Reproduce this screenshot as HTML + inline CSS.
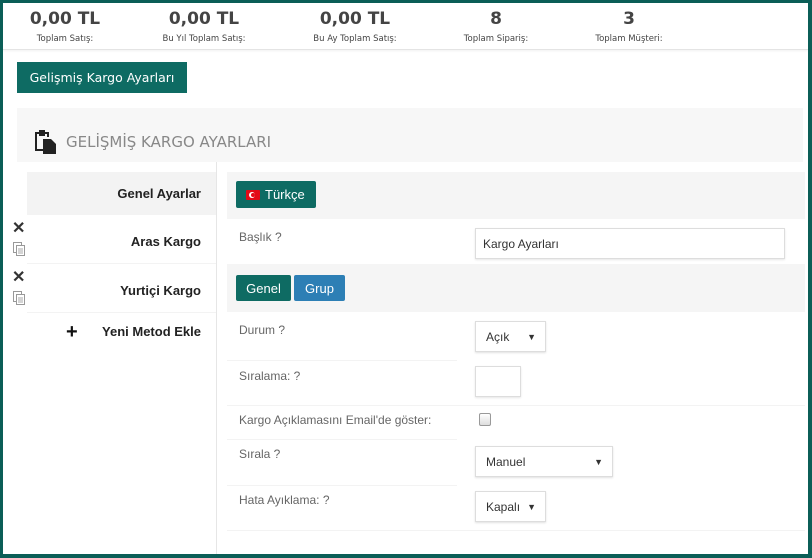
<!DOCTYPE html>
<html><head><meta charset="utf-8"><style>
*{box-sizing:border-box;margin:0;padding:0}
body{width:812px;height:558px;overflow:hidden;background:#0b5e57;font-family:"Liberation Sans",sans-serif;position:relative}
.frame{position:absolute;left:3px;top:3px;width:805px;height:551px;background:#fff;overflow:hidden}
.a{position:absolute}
.stat{position:absolute;top:6px;text-align:center;width:160px;margin-left:-80px;color:#333}
.stat b{display:block;font-family:"DejaVu Sans",sans-serif;font-size:17px;font-weight:bold;line-height:20px;color:#444}
.stat span{display:block;font-family:"DejaVu Sans",sans-serif;font-size:8.5px;color:#444;margin-top:5px}
.btn{position:absolute;color:#fff;font-size:13px;display:flex;align-items:center;justify-content:center;border-radius:2px}
.lbl{position:absolute;left:236px;font-size:12px;color:#666}
.sel{position:absolute;background:#fff;border:1px solid #ddd;box-shadow:0 1px 2px rgba(0,0,0,.12);font-size:12px;color:#333;padding-left:10px;display:flex;align-items:center}
.sel i{position:absolute;right:9px;font-style:normal;font-size:9px;top:10px}
.sep{position:absolute;height:1px;background:#f3f3f3}
.nav{position:absolute;right:0;font-weight:bold;font-size:13px;color:#222;text-align:right}
</style></head><body><div class="frame">
<div class="a" style="left:0;top:0;width:805px;height:47px;border-bottom:1px solid #e4e4e4;box-shadow:0 1px 2px rgba(0,0,0,.06)"></div>
<div class="stat" style="left:62px"><b>0,00 TL</b><span>Toplam Satış:</span></div>
<div class="stat" style="left:201px"><b>0,00 TL</b><span>Bu Yıl Toplam Satış:</span></div>
<div class="stat" style="left:352px"><b>0,00 TL</b><span>Bu Ay Toplam Satış:</span></div>
<div class="stat" style="left:493px"><b>8</b><span>Toplam Sipariş:</span></div>
<div class="stat" style="left:626px"><b>3</b><span>Toplam Müşteri:</span></div>
<div class="btn" style="left:14px;top:59px;width:170px;height:31px;background:#0e6b63;font-family:'DejaVu Sans',sans-serif;font-size:12.5px;border-radius:0">Gelişmiş Kargo Ayarları</div>
<div class="a" style="left:14px;top:105px;width:786px;height:54px;background:#f7f7f7"></div>
<svg class="a" style="left:29px;top:126px" width="26" height="26" viewBox="0 0 26 26"><path d="M3 3h4v-2h6v2h4v5h-2v-3h-2v2h-6v-2h-2v15h6v2h-8z" fill="#222"/><path d="M11 10h8l5 5v10h-13z" fill="#222"/></svg>
<div class="a" style="left:63px;top:130px;font-family:'DejaVu Sans',sans-serif;font-size:15px;color:#888">GELİŞMİŞ KARGO AYARLARI</div>
<div class="a" style="left:213px;top:159px;width:1px;height:392px;background:#e6e6e6"></div>
<div class="a" style="left:24px;top:169px;width:189px;height:43px;background:#f3f3f3"></div>
<div class="sep" style="left:24px;top:260px;width:189px"></div>
<div class="sep" style="left:24px;top:309px;width:189px"></div>
<div class="nav" style="left:0;width:198px;top:183px">Genel Ayarlar</div>
<div class="nav" style="left:0;width:198px;top:231px">Aras Kargo</div>
<div class="nav" style="left:0;width:198px;top:280px">Yurtiçi Kargo</div>
<div class="nav" style="left:0;width:198px;top:321px">Yeni Metod Ekle</div>
<div class="a" style="left:63px;top:318px;font-size:20px;font-weight:bold;color:#111">+</div>
<div class="a" style="left:9px;top:215px;font-size:16px;font-weight:bold;color:#333">✕</div>
<div class="a" style="left:9px;top:264px;font-size:16px;font-weight:bold;color:#333">✕</div>
<svg class="a" style="left:10px;top:239px" width="13" height="15"><rect x="0.5" y="0.5" width="8" height="10" fill="#fff" stroke="#999"/><rect x="3.5" y="3.5" width="8" height="10" fill="#fff" stroke="#999"/><path d="M5 7h5M5 9h5M5 11h5" stroke="#aaa"/></svg>
<svg class="a" style="left:10px;top:288px" width="13" height="15"><rect x="0.5" y="0.5" width="8" height="10" fill="#fff" stroke="#999"/><rect x="3.5" y="3.5" width="8" height="10" fill="#fff" stroke="#999"/><path d="M5 7h5M5 9h5M5 11h5" stroke="#aaa"/></svg>
<div class="a" style="left:224px;top:169px;width:578px;height:47px;background:#f5f5f5"></div>
<div class="btn" style="left:233px;top:178px;width:80px;height:27px;background:#0e6b63;justify-content:flex-start;padding-left:10px"><span style="display:inline-block;width:14px;height:10px;background:#e30a17;border-radius:1px;margin-right:5px;position:relative"><span style="position:absolute;left:3px;top:2px;width:6px;height:6px;border-radius:50%;background:#fff"></span><span style="position:absolute;left:5px;top:3px;width:4px;height:4px;border-radius:50%;background:#e30a17"></span></span>Türkçe</div>
<div class="lbl" style="top:227px">Başlık ?</div>
<div class="a" style="left:472px;top:225px;width:310px;height:31px;border:1px solid #ddd;box-shadow:0 1px 2px rgba(0,0,0,.1);font-size:12px;color:#333;padding:8px 7px">Kargo Ayarları</div>
<div class="a" style="left:224px;top:261px;width:578px;height:48px;background:#f5f5f5"></div>
<div class="btn" style="left:233px;top:272px;width:55px;height:26px;background:#0e6b63">Genel</div>
<div class="btn" style="left:291px;top:272px;width:51px;height:26px;background:#2d7fb5">Grup</div>
<div class="lbl" style="top:320px">Durum ?</div>
<div class="sel" style="left:472px;top:318px;width:71px;height:31px">Açık<i>▼</i></div>
<div class="sep" style="left:224px;top:357px;width:230px"></div>
<div class="lbl" style="top:366px">Sıralama: ?</div>
<div class="a" style="left:472px;top:363px;width:46px;height:31px;border:1px solid #ddd;box-shadow:0 1px 2px rgba(0,0,0,.1)"></div>
<div class="sep" style="left:224px;top:402px;width:578px"></div>
<div class="lbl" style="top:410px">Kargo Açıklamasını Email'de göster:</div>
<div class="a" style="left:476px;top:410px;width:12px;height:13px;border:1px solid #999;border-radius:2px;background:linear-gradient(#fff,#ddd)"></div>
<div class="sep" style="left:224px;top:436px;width:230px"></div>
<div class="lbl" style="top:444px">Sırala ?</div>
<div class="sel" style="left:472px;top:443px;width:138px;height:31px">Manuel<i>▼</i></div>
<div class="sep" style="left:224px;top:482px;width:230px"></div>
<div class="lbl" style="top:490px">Hata Ayıklama: ?</div>
<div class="sel" style="left:472px;top:488px;width:71px;height:31px">Kapalı<i>▼</i></div>
<div class="sep" style="left:224px;top:527px;width:578px"></div>
</div></body></html>
